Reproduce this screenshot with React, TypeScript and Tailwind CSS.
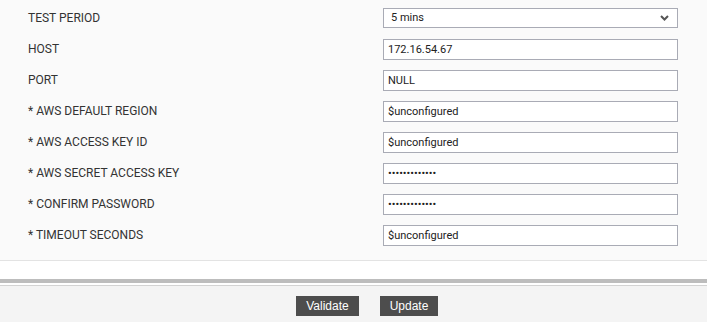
import React from "react";

const rows: { label: string; kind: "select" | "text" | "password"; value: string }[] = [
  { label: "TEST PERIOD", kind: "select", value: "5 mins" },
  { label: "HOST", kind: "text", value: "172.16.54.67" },
  { label: "PORT", kind: "text", value: "NULL" },
  { label: "* AWS DEFAULT REGION", kind: "text", value: "$unconfigured" },
  { label: "* AWS ACCESS KEY ID", kind: "text", value: "$unconfigured" },
  { label: "* AWS SECRET ACCESS KEY", kind: "password", value: "xxxxxxxxxxxxx" },
  { label: "* CONFIRM PASSWORD", kind: "password", value: "xxxxxxxxxxxxx" },
  { label: "* TIMEOUT SECONDS", kind: "text", value: "$unconfigured" },
];

export default function App() {
  return (
    <div className="w-[707px] h-[322px] overflow-hidden bg-[#f4f4f4]" style={{ fontFamily: "Roboto, 'Liberation Sans', sans-serif" }}>
      <div className="bg-[#fafafa] border-b border-[#e3e3e3] pt-[8px] pb-[15px] flex flex-col gap-[11px]">
        {rows.map((r) => (
          <div key={r.label} className="flex items-center h-[20px]">
            <div className="w-[383px] pl-[28px] text-[12px] text-[#333]">{r.label}</div>
            {r.kind === "select" ? (
              <div className="w-[295px] h-[20px] border border-[#a9abb5] bg-white flex items-center pl-[7px] pr-[8px] text-[11px] text-[#222]">
                <span className="flex-1">{r.value}</span>
                <svg width="9" height="6" viewBox="0 0 9 6">
                  <path d="M1 1 L4.5 4.5 L8 1" fill="none" stroke="#555" strokeWidth="2" />
                </svg>
              </div>
            ) : (
              <input
                readOnly
                type={r.kind}
                value={r.value}
                className="w-[295px] h-[21px] border border-[#a9abb5] bg-white pl-[4px] text-[11px] text-[#222] outline-none"
                style={{ fontFamily: "Roboto, 'Liberation Sans', sans-serif" }}
              />
            )}
          </div>
        ))}
      </div>
      <div className="bg-white h-[18px]" />
      <div className="bg-[#bdbdbd] h-[4px]" />
      <div className="bg-white h-[3px] border-b border-[#d3d3d3]" />
      <div className="flex justify-center gap-[21px] pl-[27px] pt-[10px]">
        <button className="w-[63px] h-[20px] bg-[#4d4d4d] text-white text-[12px]" style={{ fontFamily: "'Liberation Sans', Arial, sans-serif" }}>Validate</button>
        <button className="w-[58px] h-[20px] bg-[#4d4d4d] text-white text-[12px]" style={{ fontFamily: "'Liberation Sans', Arial, sans-serif" }}>Update</button>
      </div>
    </div>
  );
}
